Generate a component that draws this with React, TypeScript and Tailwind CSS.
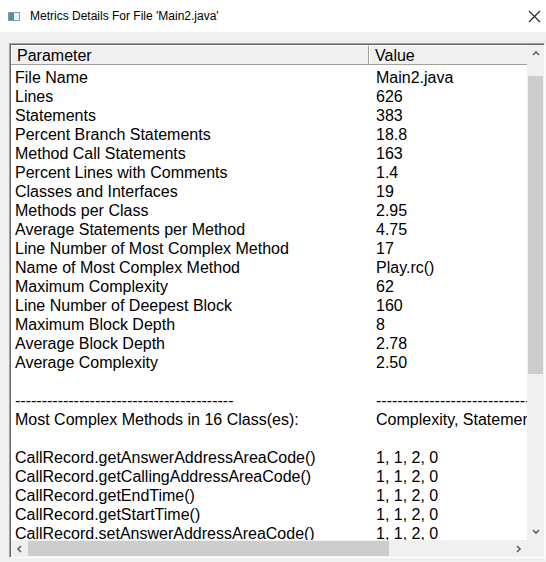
import React from 'react';

const rows: [string, string][] = [
    ['File Name', 'Main2.java'],
    ['Lines', '626'],
    ['Statements', '383'],
    ['Percent Branch Statements', '18.8'],
    ['Method Call Statements', '163'],
    ['Percent Lines with Comments', '1.4'],
    ['Classes and Interfaces', '19'],
    ['Methods per Class', '2.95'],
    ['Average Statements per Method', '4.75'],
    ['Line Number of Most Complex Method', '17'],
    ['Name of Most Complex Method', 'Play.rc()'],
    ['Maximum Complexity', '62'],
    ['Line Number of Deepest Block', '160'],
    ['Maximum Block Depth', '8'],
    ['Average Block Depth', '2.78'],
    ['Average Complexity', '2.50'],
    ['', ''],
    ['-'.repeat(41), '-'.repeat(40)],
    ['Most Complex Methods in 16 Class(es):', 'Complexity, Statements, Max Depth, Calls'],
    ['', ''],
    ['CallRecord.getAnswerAddressAreaCode()', '1, 1, 2, 0'],
    ['CallRecord.getCallingAddressAreaCode()', '1, 1, 2, 0'],
    ['CallRecord.getEndTime()', '1, 1, 2, 0'],
    ['CallRecord.getStartTime()', '1, 1, 2, 0'],
    ['CallRecord.setAnswerAddressAreaCode()', '1, 1, 2, 0'],
    ['CallRecord.setCallingAddressAreaCode()', '1, 1, 2, 0'],
];

const Arrow = ({ dir }: { dir: 'up' | 'down' | 'left' | 'right' }) => {
    const d = {
        up: 'M1 5 L4 2 L7 5',
        down: 'M1 2 L4 5 L7 2',
        left: 'M5 1 L2 4 L5 7',
        right: 'M2 1 L5 4 L2 7',
    }[dir];
    const vert = dir === 'up' || dir === 'down';
    return (
        <svg width={vert ? 8 : 7} height={vert ? 7 : 8} viewBox={vert ? '0 0 8 7' : '0 0 7 8'}>
            <path d={d} fill="none" stroke="#606060" strokeWidth="1.6" />
        </svg>
    );
};

export default function App() {
    return (
        <div className="w-[546px] h-[562px] bg-[#f0f0f0] flex flex-col overflow-hidden" style={{ fontFamily: '"Liberation Sans", Arial, sans-serif' }}>
            {/* title bar */}
            <div className="h-[32px] bg-white flex items-center shrink-0">
                <div className="ml-[8px] w-[12px] h-[9px] flex border border-[#8a9aa8] bg-[#d8e4ee]">
                    <div className="w-[5px] h-full bg-gradient-to-b from-[#5a86b8] to-[#3aa37a]" />
                    <div className="flex-1 bg-[#eef3f6]" />
                </div>
                <span className="ml-[10px] text-[12px] text-black">Metrics Details For File 'Main2.java'</span>
                <svg className="ml-auto mr-[5px]" width="13" height="13" viewBox="0 0 13 13">
                    <path d="M1 1 L12 12 M12 1 L1 12" stroke="#222" strokeWidth="1.1" />
                </svg>
            </div>

            {/* list frame */}
            <div className="ml-[9px] mt-[11px] w-[536px] h-[515px] border-t border-l border-[#a0a0a0] border-r border-b border-r-white border-b-white">
                <div className="w-full h-full border-t border-l border-[#696969] flex flex-col">
                    <div className="flex flex-1 min-h-0">
                        {/* content */}
                        <div className="flex-1 flex flex-col overflow-hidden bg-white">
                            <div className="h-[20px] flex shrink-0 bg-[#f0f0f0] border-b border-[#a0a0a0] text-[16px] leading-[19px] text-black">
                                <div className="w-[358px] border-t border-l border-white border-r border-r-[#a0a0a0] pl-[5px] shrink-0">Parameter</div>
                                <div className="flex-1 border-t border-l border-white pl-[5px]">Value</div>
                            </div>
                            <div className="pt-[3px] text-[16px] leading-[19px] text-black whitespace-nowrap">
                                {rows.map(([a, b], i) => (
                                    <div key={i} className="flex h-[19px]">
                                        <div className="w-[359px] pl-[4px] shrink-0 overflow-hidden">{a}</div>
                                        <div className="pl-[6px]">{b}</div>
                                    </div>
                                ))}
                            </div>
                        </div>
                        {/* vertical scrollbar */}
                        <div className="w-[17px] flex flex-col bg-[#f0f0f0] shrink-0">
                            <div className="h-[17px] flex items-center justify-center">
                                <Arrow dir="up" />
                            </div>
                            <div className="flex-1 flex flex-col px-[1px]">
                                <div className="h-[14px]" />
                                <div className="h-[298px] bg-[#cdcdcd]" />
                            </div>
                            <div className="h-[17px] flex items-center justify-center">
                                <Arrow dir="down" />
                            </div>
                        </div>
                    </div>
                    {/* horizontal scrollbar */}
                    <div className="h-[17px] flex shrink-0">
                        <div className="flex-1 flex bg-[#f0f0f0]">
                            <div className="w-[17px] flex items-center justify-center">
                                <Arrow dir="left" />
                            </div>
                            <div className="flex-1 flex py-[1px]">
                                <div className="w-[361px] bg-[#cdcdcd]" />
                            </div>
                            <div className="w-[17px] flex items-center justify-center">
                                <Arrow dir="right" />
                            </div>
                        </div>
                        <div className="w-[17px] bg-[#f0f0f0]" />
                    </div>
                </div>
            </div>
        </div>
    );
}
